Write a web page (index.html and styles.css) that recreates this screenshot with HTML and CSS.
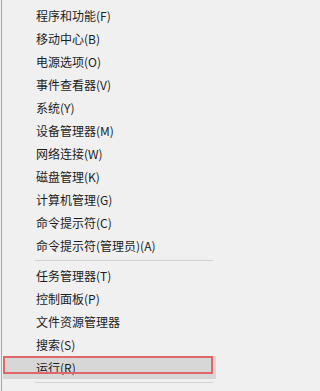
FILE: index.html
```html
<!DOCTYPE html>
<html lang="zh-CN">
<head>
<meta charset="utf-8">
<link rel="stylesheet" href="styles.css">
</head>
<body>
<ul class="menu">
  <li class="item">程序和功能(F)</li>
  <li class="item">移动中心(B)</li>
  <li class="item">电源选项(O)</li>
  <li class="item">事件查看器(V)</li>
  <li class="item">系统(Y)</li>
  <li class="item">设备管理器(M)</li>
  <li class="item">网络连接(W)</li>
  <li class="item">磁盘管理(K)</li>
  <li class="item">计算机管理(G)</li>
  <li class="item">命令提示符(C)</li>
  <li class="item">命令提示符(管理员)(A)</li>
  <li class="sep"></li>
  <li class="item">任务管理器(T)</li>
  <li class="item">控制面板(P)</li>
  <li class="item">文件资源管理器</li>
  <li class="item">搜索(S)</li>
  <li class="item active">运行(R)<span class="mark"></span></li>
  <li class="sep"></li>
</ul>
</body>
</html>
```

FILE: styles.css
```css
html, body {
  margin: 0;
  padding: 0;
  background: #f0f0f0;
  height: 100%;
  overflow: hidden;
}
.menu {
  list-style: none;
  margin: 0 0 0 1px;
  padding: 4px 0 0 0;
  border-left: 1px solid #a8a8a8;
  height: 100%;
  box-sizing: border-box;
  font-family: "Noto Sans CJK SC", "Microsoft YaHei", sans-serif;
  font-size: 12px;
  color: #1c1c1c;
}
.item {
  height: 23px;
  line-height: 23px;
  padding-left: 34px;
  white-space: nowrap;
}
.item.active {
  position: relative;
  margin-left: 1px;
  padding-left: 33px;
  width: 180px;
  background: #d7d7d7;
}
.mark {
  position: absolute;
  left: 0;
  top: 0;
  width: 206px;
  height: 14px;
  border: 2px solid #e06767;
}
.sep {
  height: 7px;
  display: flex;
  align-items: center;
  padding-left: 33px;
}
.sep::after {
  content: "";
  display: block;
  width: 178px;
  height: 1px;
  background: #d2d2d2;
}
```
